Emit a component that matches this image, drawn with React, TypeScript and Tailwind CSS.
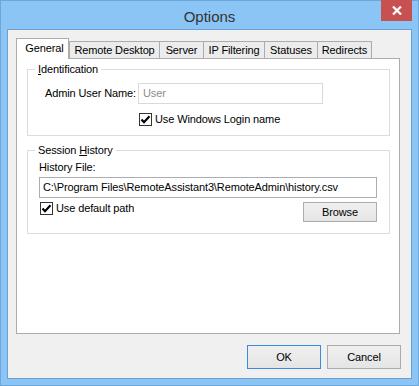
import React from "react";

const font = { fontFamily: '"Liberation Sans", Arial, sans-serif' };

function Check() {
  return (
    <span className="w-[13px] h-[13px] border border-[#333333] bg-white flex items-center justify-center shrink-0">
      <svg width="11" height="11" viewBox="0 0 11 11">
        <path d="M1.5 5.5 L4 8.2 L9.5 2.2" stroke="#000" strokeWidth="2.2" fill="none" />
      </svg>
    </span>
  );
}

function Tab({ label, w, active }: { label: string; w: string; active?: boolean }) {
  if (active)
    return (
      <div className={`${w} h-[21px] -mb-px bg-white border border-b-0 border-[#acacac] relative z-10 flex items-center justify-center pl-[4px] pb-[2px]`}>
        {label}
      </div>
    );
  return (
    <div className={`${w} h-[17px] -ml-px bg-[#ececec] border border-b-0 border-[#acacac] flex items-center justify-center`}>
      {label}
    </div>
  );
}

export default function App() {
  return (
    <div style={font} className="w-[419px] h-[386px] bg-[#8bc5f6] border border-[#6fa6da] relative text-[11px] leading-[13px] text-black">
      <div className="h-[28px] flex items-center justify-center text-[15px] text-[#333333] pt-[2px]">
        Options
      </div>
      <div className="absolute -top-px right-[6px] w-[31px] h-[21px] bg-[#c75050] flex items-center justify-center">
        <svg width="10" height="9" viewBox="0 0 10 9">
          <path d="M1 0.5 L9 8.5 M9 0.5 L1 8.5" stroke="#fff" strokeWidth="2.2" />
        </svg>
      </div>
      <div className="ml-[6px] w-[405px] h-[350px] border border-[#6d9fd2] bg-[#f0f0f0] flex flex-col pl-[8px] pt-[8px] tracking-[-0.12px]">
        <div className="h-[20px] flex items-end">
          <Tab label="General" w="w-[53px]" active />
          <div className="w-[1px]" />
          <Tab label="Remote Desktop" w="w-[91px]" />
          <Tab label="Server" w="w-[45px]" />
          <Tab label="IP Filtering" w="w-[62px]" />
          <Tab label="Statuses" w="w-[54px]" />
          <Tab label="Redirects" w="w-[55px]" />
        </div>
        <div className="w-[384px] h-[276px] border border-[#acacac] bg-white pl-[10px] pt-[4px] flex flex-col">
          <fieldset className="w-[363px] border border-[#dcdcdc] p-0">
            <legend className="ml-[7px] px-[3px]">
              <span className="underline">I</span>dentification
            </legend>
            <div className="pl-[17px] pr-[10px] pt-[7px] pb-[9px]">
              <div className="flex items-center h-[21px]">
                <span className="w-[93px]">Admin User Name:</span>
                <div className="w-[185px] h-[21px] border border-[#d9d9d9] bg-white flex items-center pl-[4px] text-[#8d8d8d]">
                  User
                </div>
              </div>
              <div className="flex items-center mt-[9px] ml-[94px] gap-[3px] h-[13px]">
                <Check />
                <span>Use Windows Login name</span>
              </div>
            </div>
          </fieldset>
          <fieldset className="w-[363px] mt-[8px] border border-[#dcdcdc] p-0">
            <legend className="ml-[7px] px-[3px]">
              Session <span className="underline">H</span>istory
            </legend>
            <div className="pl-[11px] pr-[12px] pt-[4px] pb-[11px]">
              <div className="h-[13px]">History File:</div>
              <div className="mt-[3px] h-[21px] border border-[#abadb3] bg-white flex items-center pl-[3px] whitespace-nowrap overflow-hidden">
                C:\Program Files\RemoteAssistant3\RemoteAdmin\history.csv
              </div>
              <div className="flex justify-between items-start mt-[4px]">
                <div className="flex items-center gap-[3px] h-[13px] ml-[1px]">
                  <Check />
                  <span>Use default path</span>
                </div>
                <div className="w-[74px] h-[20px] border border-[#acacac] bg-gradient-to-b from-[#f0f0f0] to-[#e5e5e5] flex items-center justify-center">
                  Browse
                </div>
              </div>
            </div>
          </fieldset>
        </div>
        <div className="flex justify-end gap-[6px] mt-[11px] pr-[10px]">
          <div className="w-[74px] h-[24px] border border-[#3c8ae0] bg-gradient-to-b from-[#f0f0f0] to-[#e5e5e5] flex items-center justify-center">
            OK
          </div>
          <div className="w-[74px] h-[24px] border border-[#acacac] bg-gradient-to-b from-[#f0f0f0] to-[#e5e5e5] flex items-center justify-center">
            Cancel
          </div>
        </div>
      </div>
    </div>
  );
}
